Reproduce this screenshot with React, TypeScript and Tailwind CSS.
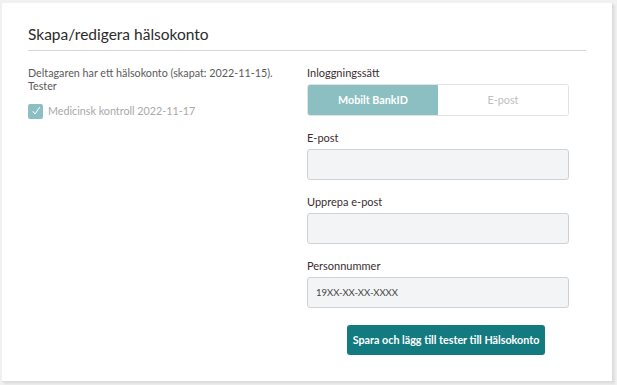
import { useState } from "react";

const font = { fontFamily: "Lato, 'Noto Sans', sans-serif" };

function Field({ label, value, placeholder }: { label: string; value?: string; placeholder?: string }) {
    return (
        <div className="flex flex-col">
            <p className="text-[11px] leading-[14px] text-[#3b2c32] mb-[4px]">{label}</p>
            <input
                className="h-[31px] w-full rounded-[3px] border border-[#cfd2d6] bg-[#f3f4f6] px-[8px] text-[9.5px] text-[#444] placeholder:text-[#444] outline-none"
                type="text"
                defaultValue={value}
                placeholder={placeholder}
            />
        </div>
    );
}

export default function App() {
    const [method, setMethod] = useState("bankid");

    return (
        <div className="h-[385px] w-[617px] bg-[#f1f1f1] pl-[2px] pt-[3px]" style={font}>
            <div className="h-[379px] w-[611px] bg-white border-r-[1px] border-b-[1px] border-[#dcdcdc] shadow-[2px_2px_2px_rgba(0,0,0,0.08)]">
                <div className="px-[26px] pt-[20px]">
                    <h1 className="text-[15.5px] leading-[22px] text-[#2b2b2b] pb-[5px] border-b border-[#d6d6d6]">
                        Skapa/redigera hälsokonto
                    </h1>
                </div>

                <div className="flex pl-[26px] pt-[15px]">
                    <div className="w-[279px]">
                        <p className="text-[10.75px] leading-[13px] text-[#5a5a5a]">
                            Deltagaren har ett hälsokonto (skapat: 2022-11-15).
                            <br />
                            Tester
                        </p>
                        <div className="flex items-center gap-[5px] mt-[11px]">
                            <div className="flex h-[15px] w-[15px] items-center justify-center rounded-[2px] bg-[#8bbfc2]">
                                <svg width="10" height="10" viewBox="0 0 10 10" fill="none">
                                    <path d="M2 5.5 L4 8 L8.5 1.5" stroke="white" strokeWidth="1" strokeLinecap="round" strokeLinejoin="round" />
                                </svg>
                            </div>
                            <span className="text-[10.75px] text-[#a8a8a8]">Medicinsk kontroll 2022-11-17</span>
                        </div>
                    </div>

                    <div className="w-[262px] flex flex-col">
                        <p className="text-[11px] leading-[14px] text-[#3b2c32] mb-[4px]">Inloggningssätt</p>
                        <div className="flex h-[32px] rounded-[3px] border border-[#e2e2e2] overflow-hidden">
                            <button
                                onClick={() => setMethod("bankid")}
                                className={method === "bankid" ? "w-1/2 bg-[#8bbfc2] text-white text-[10.75px] font-bold" : "w-1/2 bg-white text-[#bdbdbd] text-[10.75px]"}
                            >
                                Mobilt BankID
                            </button>
                            <button
                                onClick={() => setMethod("epost")}
                                className={method === "epost" ? "w-1/2 bg-[#8bbfc2] text-white text-[10.75px] font-bold" : "w-1/2 bg-white text-[#bdbdbd] text-[10.75px]"}
                            >
                                E-post
                            </button>
                        </div>

                        <div className="mt-[15px] flex flex-col gap-[15px]">
                            <Field label="E-post" />
                            <Field label="Upprepa e-post" />
                            <Field label="Personnummer" value="19XX-XX-XX-XXXX" />
                        </div>

                        <div className="flex justify-center mt-[17px] pl-[16px]">
                            <button className="h-[30px] w-[198px] whitespace-nowrap rounded-[3px] bg-[#137b80] text-white text-[10.75px] font-bold">
                                Spara och lägg till tester till Hälsokonto
                            </button>
                        </div>
                    </div>
                </div>
            </div>
        </div>
    );
}
